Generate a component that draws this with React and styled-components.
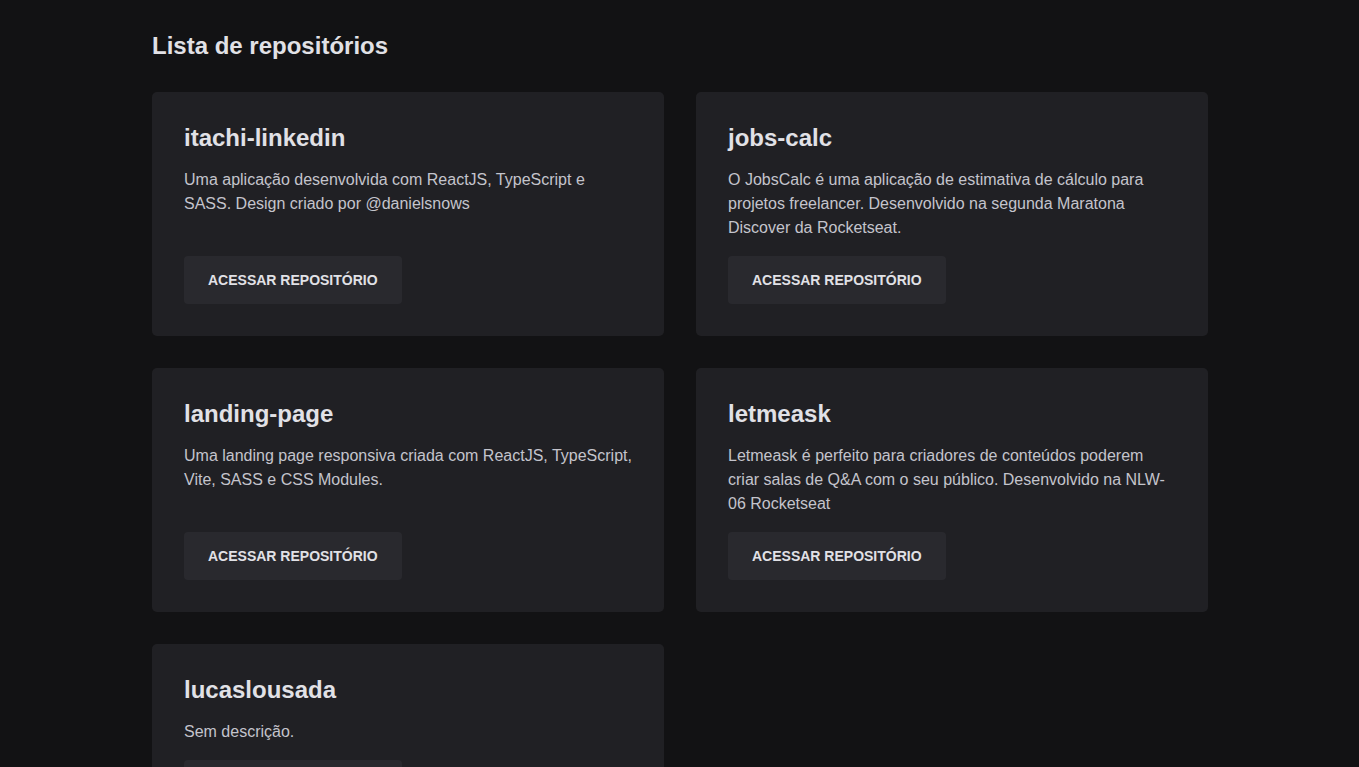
import React from "react";
import styled, { createGlobalStyle } from "styled-components";

const repos = [
  {
    name: "itachi-linkedin",
    description: "Uma aplicação desenvolvida com ReactJS, TypeScript e SASS. Design criado por @danielsnows",
  },
  {
    name: "jobs-calc",
    description:
      "O JobsCalc é uma aplicação de estimativa de cálculo para projetos freelancer. Desenvolvido na segunda Maratona Discover da Rocketseat.",
  },
  {
    name: "landing-page",
    description: "Uma landing page responsiva criada com ReactJS, TypeScript, Vite, SASS e CSS Modules.",
  },
  {
    name: "letmeask",
    description:
      "Letmeask é perfeito para criadores de conteúdos poderem criar salas de Q&A com o seu público. Desenvolvido na NLW-06 Rocketseat",
  },
  {
    name: "lucaslousada",
    description: null,
  },
];

function App() {
  return (
    <>
      <GlobalStyle />
      <Wrapper>
        <Heading>Lista de repositórios</Heading>
        <Grid>
          {repos.map((repo) => (
            <Card key={repo.name}>
              <Title>{repo.name}</Title>
              <Description>{repo.description || "Sem descrição."}</Description>
              <AccessButton href="#">Acessar repositório</AccessButton>
            </Card>
          ))}
        </Grid>
      </Wrapper>
    </>
  );
}

export default App;

const GlobalStyle = createGlobalStyle`
* {
  margin: 0;
  padding: 0;
  box-sizing: border-box;
}
body {
  background: #121214;
  color: #e1e1e6;
  font-family: "Liberation Sans", Arial, sans-serif;
  -webkit-font-smoothing: antialiased;
}
`

const Wrapper = styled.main`
width: 1056px;
margin: 0 auto;
padding: 32px 0 64px 1px;
box-sizing: content-box;
`

const Heading = styled.h1`
font-size: 24px;
font-weight: 700;
line-height: 28px;
color: #e1e1e6;
margin-bottom: 32px;
`

const Grid = styled.div`
display: grid;
grid-template-columns: repeat(2, 1fr);
gap: 32px;
`

const Card = styled.article`
display: flex;
flex-direction: column;
align-items: flex-start;
background: #202024;
border-radius: 5px;
padding: 32px;
`

const Title = styled.h2`
font-size: 24px;
font-weight: 700;
line-height: 28px;
color: #e1e1e6;
margin-bottom: 16px;
`

const Description = styled.p`
flex: 1;
font-size: 16px;
line-height: 24px;
color: #c4c4cc;
margin-bottom: 16px;
max-width: 450px;
`

const AccessButton = styled.a`
display: inline-flex;
align-items: center;
justify-content: center;
height: 48px;
padding: 0 24px;
background: #29292e;
border-radius: 4px;
color: #e1e1e6;
font-size: 14px;
font-weight: 700;
text-transform: uppercase;
text-decoration: none;
`
